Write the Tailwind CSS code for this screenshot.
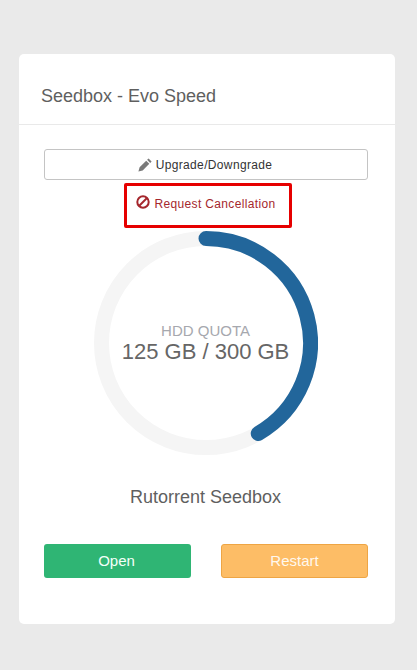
<!DOCTYPE html>
<html lang="en">
<head>
  <meta charset="UTF-8" />
  <meta name="viewport" content="width=device-width, initial-scale=1" />
  <title>Seedbox - Evo Speed</title>
  <script src="https://cdn.jsdelivr.net/npm/@tailwindcss/browser@4"></script>
</head>
<body class="bg-[#eaeaea] font-['Liberation_Sans',Arial,sans-serif] h-[670px] overflow-hidden">
  <div class="pt-[54px] pl-[19px]">
    <div class="w-[376px] h-[570px] bg-white rounded-[5px]">
      <div class="h-[71px] border-b border-[#e9e9e9] pl-[22px] pt-[31px]">
        <h1 class="text-[18px] leading-[22px] text-[#5f5f5f]">Seedbox - Evo Speed</h1>
      </div>

      <div class="pl-[25px] pr-[27px] pt-[24px]">
        <button class="w-full h-[31px] flex items-center justify-center gap-[4px] pr-[2px] bg-white border border-[#c4c4c4] rounded-[3px] text-[12px] tracking-[0.35px] text-[#333]">
          <svg class="w-[14px] h-[14px]" viewBox="0 0 14 14"><path fill="#7a7a7a" d="M10.6 .4 13.6 3.4 12.2 4.9 9.1 1.8ZM8.2 2.7 11.3 5.8 4.7 12.4 .4 13.6 1.6 9.3Z"/></svg>
          Upgrade/Downgrade
        </button>

        <div class="flex justify-center pl-[4px] mt-[3px]">
          <a href="#" class="w-[168px] h-[45px] border-[3px] border-[#e60000] rounded-[2px] flex justify-center items-start pt-[8px] pr-[4px] gap-[4px] text-[12px] leading-[20px] tracking-[0.35px] text-[#a5272d]">
            <svg class="w-[14px] h-[14px] mt-[1px]" viewBox="0 0 14 14" fill="none" stroke="#a5272d" stroke-width="2"><circle cx="7" cy="7" r="5.7"/><path d="M3 11 11 3"/></svg>
            Request Cancellation
          </a>
        </div>

        <div class="relative w-[224px] h-[224px] mx-auto mt-[3px]">
          <svg class="w-[224px] h-[224px]" viewBox="0 0 224 224" fill="none" stroke-width="15">
            <circle cx="112" cy="112" r="104.5" stroke="#f5f5f5"/>
            <path d="M112 7.5A104.5 104.5 0 0 1 164.25 202.5" stroke="#22669b" stroke-linecap="round"/>
          </svg>
          <div class="absolute inset-0 flex flex-col items-center justify-center text-center pb-[1px] pr-[1px]">
            <div class="text-[15px] leading-[17px] text-[#a6a8ae]">HDD QUOTA</div>
            <div class="text-[22px] leading-[25px] text-[#666]">125 GB / 300 GB</div>
          </div>
        </div>

        <p class="text-center text-[18px] leading-[22px] text-[#5f5f5f] mt-[31px] pr-[1px]">Rutorrent Seedbox</p>

        <div class="grid grid-cols-2 gap-[30px] mt-[36px]">
          <button class="h-[34px] pr-[2px] bg-[#2fb574] rounded-[3px] text-[15px] text-[#f4fff9]">Open</button>
          <button class="h-[34px] bg-[#fdbd66] border border-[#eea544] rounded-[3px] text-[15px] text-[#fff8ee]">Restart</button>
        </div>
      </div>
    </div>
  </div>
</body>
</html>
